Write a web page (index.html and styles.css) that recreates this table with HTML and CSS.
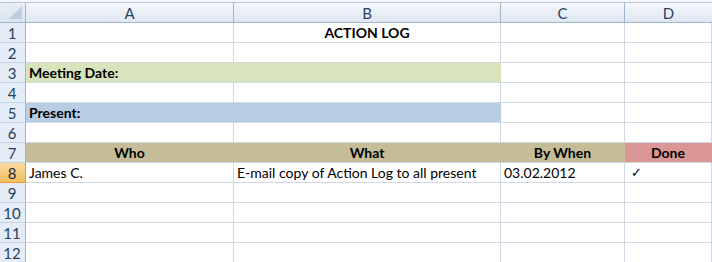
FILE: index.html
```html
<!DOCTYPE html>
<html>
<head>
<meta charset="utf-8">
<link rel="stylesheet" href="styles.css">
</head>
<body>
<div class="topstrip"></div>
<div class="sheet">
  <div class="corner"><span class="tri"></span></div>
  <div class="colhead">A</div>
  <div class="colhead">B</div>
  <div class="colhead">C</div>
  <div class="colhead last">D</div>

  <div class="rowhead">1</div>
  <div class="cell"></div>
  <div class="cell bold center">ACTION LOG</div>
  <div class="cell"></div>
  <div class="cell"></div>

  <div class="rowhead">2</div>
  <div class="cell"></div>
  <div class="cell"></div>
  <div class="cell"></div>
  <div class="cell"></div>

  <div class="rowhead">3</div>
  <div class="cell span2 green bold">Meeting Date:</div>
  <div class="cell"></div>
  <div class="cell"></div>

  <div class="rowhead">4</div>
  <div class="cell"></div>
  <div class="cell"></div>
  <div class="cell"></div>
  <div class="cell"></div>

  <div class="rowhead">5</div>
  <div class="cell span2 blue bold">Present:</div>
  <div class="cell"></div>
  <div class="cell"></div>

  <div class="rowhead">6</div>
  <div class="cell"></div>
  <div class="cell"></div>
  <div class="cell"></div>
  <div class="cell"></div>

  <div class="rowhead">7</div>
  <div class="cell tan bold center">Who</div>
  <div class="cell tan bold center">What</div>
  <div class="cell tan bold center">By When</div>
  <div class="cell pink bold center">Done</div>

  <div class="rowhead sel">8</div>
  <div class="cell">James C.</div>
  <div class="cell">E-mail copy of Action Log to all present</div>
  <div class="cell">03.02.2012</div>
  <div class="cell check">✓</div>

  <div class="rowhead">9</div>
  <div class="cell"></div>
  <div class="cell"></div>
  <div class="cell"></div>
  <div class="cell"></div>

  <div class="rowhead">10</div>
  <div class="cell"></div>
  <div class="cell"></div>
  <div class="cell"></div>
  <div class="cell"></div>

  <div class="rowhead">11</div>
  <div class="cell"></div>
  <div class="cell"></div>
  <div class="cell"></div>
  <div class="cell"></div>

  <div class="rowhead">12</div>
  <div class="cell"></div>
  <div class="cell"></div>
  <div class="cell"></div>
  <div class="cell"></div>
</div>
</body>
</html>
```
FILE: styles.css
```css
html, body {
  margin: 0;
  padding: 0;
  background: #ffffff;
  overflow: hidden;
}
body {
  font-family: Lato, "Liberation Sans", sans-serif;
  font-size: 14px;
  color: #000;
}
.topstrip {
  height: 2px;
  background: #f3f5f8;
  border-bottom: 1px solid #b8c9dd;
}
.sheet {
  display: grid;
  grid-template-columns: 26px 208px 267px 124px 1fr;
  grid-auto-rows: 20px;
}
.corner {
  position: relative;
  background: linear-gradient(#e9eef5, #dbe4ef);
  border-right: 1px solid #9eb6ce;
  border-bottom: 1px solid #9eb6ce;
}
.tri {
  position: absolute;
  right: 3px;
  bottom: 3px;
  width: 0;
  height: 0;
  border-left: 13px solid transparent;
  border-bottom: 13px solid #bccbdd;
}
.colhead {
  background: linear-gradient(#f4f7fb, #dfe7f1);
  border-right: 1px solid #9eb6ce;
  border-bottom: 1px solid #9eb6ce;
  display: flex;
  align-items: center;
  justify-content: center;
  color: #27415f;
  font-size: 15px;
}
.colhead.last { border-right: none; }
.rowhead {
  background: #e4ecf7;
  border-right: 1px solid #9eb6ce;
  border-bottom: 1px solid #c5d2e3;
  display: flex;
  align-items: center;
  justify-content: center;
  color: #27415f;
  font-size: 15px;
  padding-right: 1px;
}
.rowhead.sel {
  background: linear-gradient(#f9d99f, #f1c15f);
  border-right: 1px solid #f29536;
  border-bottom: 1px solid #f29536;
  color: #1a2a3a;
}
.cell {
  border-right: 1px solid #d0d7e5;
  border-bottom: 1px solid #d0d7e5;
  padding: 0 3px 1px;
  display: flex;
  align-items: flex-end;
  white-space: nowrap;
  overflow: hidden;
  line-height: 17px;
}
.span2 { grid-column: span 2; }
.bold { font-weight: bold; }
.center { justify-content: center; }
.green { background: #d8e4bc; border-right-color: #d8e4bc; }
.blue { background: #b8cce4; border-right-color: #b8cce4; }
.tan { background: #c4bd97; border-right-color: #c4bd97; }
.pink { background: #da9694; border-right-color: #da9694; }
.check { padding-left: 6px; font-family: "DejaVu Sans", sans-serif; font-size: 13px; font-weight: bold; }
```
